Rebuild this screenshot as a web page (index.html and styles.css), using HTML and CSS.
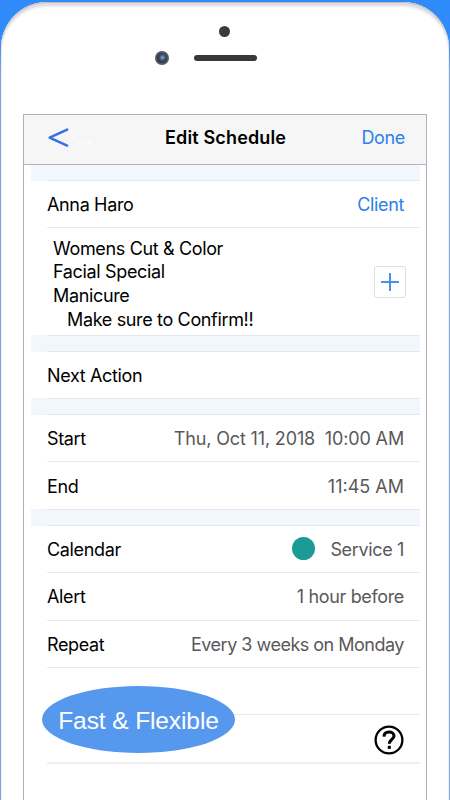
FILE: index.html
```
<!DOCTYPE html>
<html lang="en">
<head>
    <meta charset="UTF-8">
    <meta name="viewport" content="width=device-width, initial-scale=1.0">
    <title>Edit Schedule</title>
    <link rel="stylesheet" href="styles.css">
</head>
<body>
    <div class="phone">
        <div class="phone-top">
            <span class="sensor"></span>
            <div class="speaker-row">
                <span class="camera"></span>
                <span class="speaker"></span>
            </div>
        </div>
        <div class="screen">
            <header class="navbar">
                <a href="#" class="back">
                    <svg width="21" height="20" viewBox="0 0 21 20"><path d="M19.2 1.6 L1.6 9.7 L19.2 17.6" fill="none" stroke="#356fe8" stroke-width="2.4" stroke-linecap="round" stroke-linejoin="round"/></svg>
                    <span class="dots">...</span>
                </a>
                <h1>Edit Schedule</h1>
                <a href="#" class="done">Done</a>
            </header>
            <main class="list">
                <div class="band first"></div>
                <div class="row">
                    <span class="label">Anna Haro</span>
                    <a href="#" class="link">Client</a>
                </div>
                <div class="row notes">
                    <div class="services">
                        <p>Womens Cut &amp; Color</p>
                        <p>Facial Special</p>
                        <p>Manicure</p>
                        <p class="reminder">Make sure to Confirm!!</p>
                    </div>
                    <button class="add">
                        <svg width="18" height="18" viewBox="0 0 18 18"><path d="M9 0V18M0 9H18" stroke="#4a90f0" stroke-width="2"/></svg>
                    </button>
                </div>
                <div class="band"></div>
                <div class="row short"><span class="label">Next Action</span></div>
                <div class="band"></div>
                <div class="row">
                    <span class="label">Start</span>
                    <span class="value date">Thu, Oct 11, 2018&nbsp; 10:00 AM</span>
                </div>
                <div class="row last">
                    <span class="label">End</span>
                    <span class="value time">11:45 AM</span>
                </div>
                <div class="band"></div>
                <div class="row">
                    <span class="label">Calendar</span>
                    <span class="value service"><i class="dot"></i>Service 1</span>
                </div>
                <div class="row">
                    <span class="label">Alert</span>
                    <span class="value">1 hour before</span>
                </div>
                <div class="row">
                    <span class="label">Repeat</span>
                    <span class="value weeks">Every 3 weeks on Monday</span>
                </div>
                <div class="row"></div>
                <div class="row help-row">
                    <svg width="30" height="30" viewBox="0 0 30 30"><circle cx="15" cy="15" r="13.4" fill="none" stroke="#000" stroke-width="2.3"/><path d="M10 11.6C10.1 8.4 12.1 7 15 7C18 7 20 8.6 20 11C20 14.3 15.3 14.5 15.3 18.7" fill="none" stroke="#000" stroke-width="3.1"/><path d="M13.8 20.8H16.8V23.9H13.8Z"/></svg>
                </div>
            </main>
            <div class="badge">Fast &amp; Flexible</div>
        </div>
    </div>
</body>
</html>
```

FILE: styles.css
```
* {
    margin: 0;
    padding: 0;
    box-sizing: border-box;
}

body {
    height: 100vh;
    padding: 2px 1px 0;
    background: linear-gradient(#2f8bf9 0, #2f8bf9 35px, #7ba9df 75px);
    font-family: Inter, 'Liberation Sans', sans-serif;
    font-size: 18px;
    letter-spacing: -0.35px;
    overflow: hidden;
}

a {
    color: #2b80ea;
    text-decoration: none;
}

.phone {
    height: 798px;
    padding: 0 22px;
    background: #fff;
    border-radius: 46px 46px 0 0;
    box-shadow: inset 0 1px 1px #bbb, inset 0 4px 1px #e3e0e3, inset 0 5px 3px #f0eef0;
}

.phone-top {
    height: 112px;
    padding-top: 24px;
}

.sensor {
    display: block;
    width: 11px;
    height: 11px;
    margin-left: 196px;
    border-radius: 50%;
    background: #3b3b3b;
}

.speaker-row {
    display: flex;
    align-items: center;
    margin: 14px 0 0 132px;
}

.camera {
    width: 14px;
    height: 14px;
    border: 2px solid #56585c;
    border-radius: 50%;
    background: radial-gradient(circle at 55% 45%, #8ba9d8 0, #40557f 35%, #25272e 75%);
}

.speaker {
    width: 63px;
    height: 6px;
    margin-left: 24.5px;
    border-radius: 3px;
    background: #383838;
}

.screen {
    position: relative;
    width: 404px;
    height: 686px;
    border: 1px solid #b2b2b4;
    border-bottom: 0;
}

.navbar {
    display: flex;
    align-items: center;
    height: 50px;
    padding: 0 21px 4px 24px;
    background: #f6f6f6;
    border-bottom: 1px solid #b5b5b7;
}

.navbar h1 {
    margin: 0 auto 0 56px;
    font-size: 18px;
    font-weight: 600;
    letter-spacing: 0.15px;
}

.back {
    display: flex;
    align-items: center;
    gap: 8px;
    width: 61px;
}

.dots {
    color: #fff;
}

.list {
    margin: 0 6px 0 7px;
}

.band {
    height: 17px;
    background: linear-gradient(#e4e8ee, #e4e8ee) 16px 0 / 100% 1px no-repeat,
        linear-gradient(#e4e8ee, #e4e8ee) 16px 100% / 100% 1px no-repeat,
        #f2f7fe;
}

.band.first {
    height: 16px;
    background: linear-gradient(#e4e8ee, #e4e8ee) 16px 100% / 100% 1px no-repeat, #f2f7fe;
}

.row {
    display: flex;
    align-items: center;
    justify-content: space-between;
    height: 47.3px;
    margin-left: 16px;
    padding: 1px 16px 0 0;
    border-bottom: 1px solid #e9e9eb;
}

.row.last {
    height: 46.7px;
    border-bottom: 0;
}

.row.short {
    height: 46px;
    padding-top: 2px;
    border-bottom: 0;
}

.row.notes {
    height: 106.7px;
    padding: 0 14px 0 6px;
    border-bottom: 0;
}

.services {
    padding-top: 5px;
    line-height: 23.7px;
}

.reminder {
    padding-left: 14px;
}

.add {
    display: flex;
    align-items: center;
    justify-content: center;
    width: 32px;
    height: 32px;
    background: #fff;
    border: 1px solid #dedee0;
    border-radius: 3px;
}

.value {
    color: #58585a;
}

.date {
    letter-spacing: -0.15px;
}

.time {
    letter-spacing: 0;
}

.weeks {
    letter-spacing: -0.5px;
}

.service {
    display: flex;
    align-items: center;
}

.dot {
    width: 23px;
    height: 23px;
    margin: -2px 15px 0 0;
    border-radius: 50%;
    background: #1b9a96;
}

.row.help-row {
    justify-content: flex-end;
    height: 49px;
    padding-top: 2px;
    border-bottom: 2px solid #efeff0;
}

.badge {
    position: absolute;
    left: 18px;
    top: 571px;
    width: 193px;
    height: 67px;
    border-radius: 50%;
    background: #5798ef;
    color: #fff;
    font: 24.5px/69px 'Liberation Sans', sans-serif;
    letter-spacing: -0.1px;
    text-align: center;
    white-space: nowrap;
}
```
